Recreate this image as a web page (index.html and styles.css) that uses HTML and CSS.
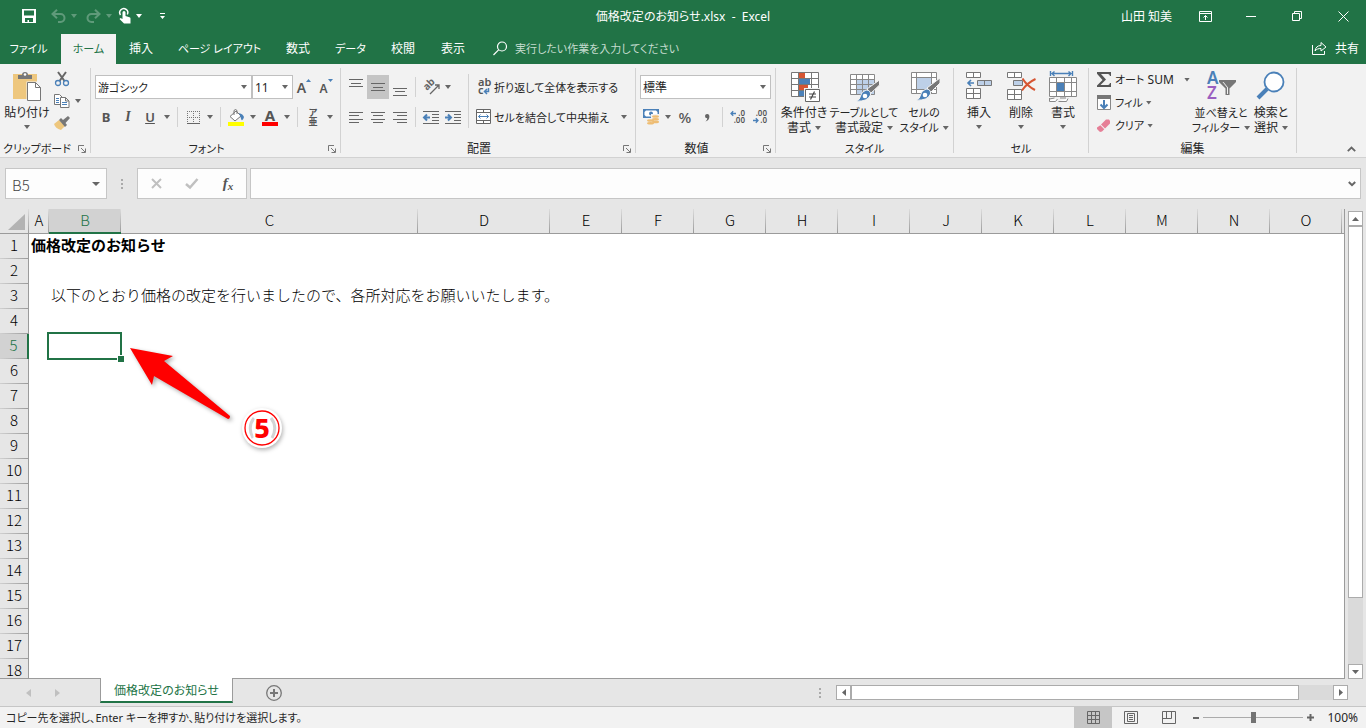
FILE: index.html
```html
<!DOCTYPE html>
<html lang="ja">
<head>
<meta charset="utf-8">
<title>価格改定のお知らせ.xlsx - Excel</title>
<link rel="stylesheet" href="styles.css">
</head>
<body>
<header class="titlebar">
  <div class="quick">
    <button class="q-btn q-save" aria-label="上書き保存"><svg width="14" height="14"><path fill="#fff" fill-rule="evenodd" d="M0 0h14v14H0zM2 1.500v5h10v-5zM3 9v4h2.500v-2H7v2h4V9z"/></svg></button>
    <button class="q-btn dim" aria-label="元に戻す"><svg width="15" height="14" fill="none" stroke="#fff" stroke-width="2"><path d="M1 5h8.500a4 4 0 0 1 0 8H7M6 .8L1.500 5 6 9.200"/></svg><i class="caret"></i></button>
    <button class="q-btn dim" aria-label="やり直し"><svg width="15" height="14" fill="none" stroke="#fff" stroke-width="2"><path d="M14 5H5.500a4 4 0 0 0 0 8H8M9 .8L13.500 5 9 9.200"/></svg><i class="caret"></i></button>
    <button class="q-btn q-touch" aria-label="タッチ/マウス モード"><svg width="12" height="16"><path fill="none" stroke="#fff" stroke-width="1.500" d="M1.500 7A4 4 0 1 1 8.300 6.500"/><path fill="#fff" d="M3.500 4.500a1.500 1.500 0 0 1 3 0V8l4 1.200c.8.300 1 .8 1 1.500V15.500H5L.5 11l1-1 2 1z"/></svg><i class="caret"></i></button>
    <button class="q-btn q-more" aria-label="クイック アクセス ツール バーのユーザー設定"><svg width="5" height="6" fill="#fff"><path d="M0 0h5v1H0zM0 3h5L2.500 6z"/></svg></button>
  </div>
  <div class="doc-title">価格改定のお知らせ.xlsx&nbsp; -&nbsp; Excel</div>
  <div class="window">
    <span class="user">山田 知美</span>
    <button aria-label="リボンの表示オプション"><svg width="13" height="11" fill="none" stroke="#fff"><path d="M.5.500h12v10H.5zM.5 2.500h12M6.500 9V4.500M4.500 6.500l2-2 2 2"/></svg></button>
    <button aria-label="最小化"><svg width="10" height="1"><path fill="#fff" d="M0 0h10v1H0z"/></svg></button>
    <button aria-label="元のサイズに戻す"><svg width="10" height="10" fill="none" stroke="#fff"><path d="M.5 2.500h7v7h-7zM2.500 2.500v-2h7v7h-2"/></svg></button>
    <button aria-label="閉じる"><svg width="11" height="11" fill="none" stroke="#fff"><path d="M.5.500l10 10M10.500.500l-10 10"/></svg></button>
  </div>
</header>

<nav class="tabs">
  <button class="tab file tight">ファイル</button>
  <button class="tab active home tight">ホーム</button>
  <button class="tab">挿入</button>
  <button class="tab page tight">ページ レイアウト</button>
  <button class="tab">数式</button>
  <button class="tab data tight">データ</button>
  <button class="tab">校閲</button>
  <button class="tab">表示</button>
  <label class="tellme"><svg width="15" height="15" fill="none" stroke="#fff" stroke-width="1.200"><circle cx="9" cy="5.500" r="4.500"/><path d="M5.800 8.700L.5 14"/></svg><input class="tight" type="text" placeholder="実行したい作業を入力してください"></label>
  <button class="share"><svg width="15" height="14" fill="none" stroke="#fff"><path d="M.5 4v9.500h12V10M3 10c.5-3.500 2.500-5.500 6-5.500V1.500l5 4.500-5 4V7.500C6.500 7.500 4.500 8 3 10z"/></svg>共有</button>
</nav>

<section class="ribbon">
  <div class="group g-clip">
    <div class="tools">
      <button class="big"><svg width="32" height="32"><path fill="#eec77e" d="M2 3h24v25H2z"/><path fill="#777" d="M7 8V4h4a3 3 0 0 1 6 0h4v4z"/><circle cx="14" cy="3.500" r="1.300" fill="#fff"/><path fill="#fff" stroke="#f2f2f2" stroke-width="3" d="M17 12h9l4 4v14H17z"/><path fill="#fff" stroke="#777" d="M16.500 11.500h8l5 5v13H16.500zM24.500 11.500V16.500H29.500"/></svg><span>貼り付け</span><i class="caret"></i></button>
      <div class="stack">
        <button class="small" aria-label="切り取り"><svg width="16" height="16" fill="none"><path stroke="#666" stroke-width="2" d="M4 1l6.500 9M12 1L5.500 10"/><circle cx="4" cy="12" r="2.500" stroke="#4a80b8" stroke-width="1.300"/><circle cx="12" cy="12" r="2.500" stroke="#4a80b8" stroke-width="1.300"/></svg></button>
        <button class="small" aria-label="コピー"><svg width="16" height="15" fill="#fff" stroke="#777"><path d="M.5.500h5l3 3v7h-8z"/><path d="M6.500 3.500h5l3.500 3.500v6.500H6.500zM11.500 3.500V7H15"/><path stroke="#4a80b8" d="M2 4.500h3M2 6.500h3M2 8.500h3M8 8.500h5M8 10.500h5"/></svg><i class="caret"></i></button>
        <button class="small" aria-label="書式のコピー/貼り付け"><svg width="16" height="14"><path fill="#eec77e" d="M0 8l5-4 6 6-4 4C3 13 1 11 0 8z"/><path fill="#777" d="M5 4l2-2 2 2 5-4 2 2-4.500 5L13 9l-2 2z"/></svg></button>
      </div>
    </div>
    <div class="foot tight">クリップボード<button class="launch" aria-label="クリップボードの詳細"><svg width="8" height="8" fill="none" stroke="#777"><path d="M.5 6V.5H6M3 3l4 4M7.500 3.500v4h-4"/></svg></button></div>
  </div>

  <div class="group g-font">
    <div class="tools rows">
      <div class="row">
        <span class="combo c-font"><select class="tight" aria-label="フォント"><option>游ゴシック</option></select><i class="caret"></i></span><span class="combo c-size"><select aria-label="フォント サイズ"><option>11</option></select><i class="caret"></i></span>
        <button class="ib" aria-label="フォント サイズの拡大"><span class="grow">A</span><svg class="tick" width="5" height="3"><path fill="#4a80b8" d="M0 3h5L2.500 0z"/></svg></button>
        <button class="ib" aria-label="フォント サイズの縮小"><span class="shrink">A</span><svg class="tick" width="5" height="3"><path fill="#4a80b8" d="M0 0h5L2.500 3z"/></svg></button>
      </div>
      <div class="row">
        <button class="ib bold">B</button><button class="ib ital">I</button><button class="ib under">U</button><button class="car" aria-label="下線"><i class="caret"></i></button>
        <i class="sep"></i>
        <button class="ib" aria-label="罫線"><svg width="13" height="13"><path fill="none" stroke="#777" stroke-dasharray="1 1" d="M0 .5h13M0 6.500h13M.5 0v12M6.500 0v12M12.500 0v12"/><path fill="#666" d="M0 12h13v1H0z"/></svg></button><button class="car" aria-label="罫線の種類"><i class="caret"></i></button>
        <i class="sep"></i>
        <button class="ib" aria-label="塗りつぶしの色"><svg width="16" height="17"><path fill="#fff" stroke="#777" d="M2 7.500L8 2l5 5-6 5z"/><path fill="none" stroke="#777" d="M6 6V1.500Q7.500-.5 9 1.500V5"/><path fill="#4a80b8" d="M11 4q4 1 5 4-1 4-2.500 3z"/><path fill="#ff0" d="M0 13h16v4H0z"/></svg></button><button class="car" aria-label="塗りつぶしの色の選択"><i class="caret"></i></button>
        <button class="ib fcolor" aria-label="フォントの色"><span>A</span></button><button class="car" aria-label="フォントの色の選択"><i class="caret"></i></button>
        <i class="sep"></i>
        <button class="ib ruby" aria-label="ふりがなの表示"><span>ア</span><span>亜</span></button><button class="car" aria-label="ふりがなの設定"><i class="caret"></i></button>
      </div>
    </div>
    <div class="foot tight">フォント<button class="launch" aria-label="フォントの設定"><svg width="8" height="8" fill="none" stroke="#777"><path d="M.5 6V.5H6M3 3l4 4M7.500 3.500v4h-4"/></svg></button></div>
  </div>

  <div class="group g-align">
    <div class="tools">
      <div class="rows">
        <div class="row">
          <button class="ib" aria-label="上揃え"><svg width="14" height="17" stroke="#666"><path d="M0 .5h14M2 4.500h10M0 7.500h14"/></svg></button><button class="ib on" aria-label="上下中央揃え"><svg width="14" height="17" stroke="#666"><path d="M0 4.500h14M2 8.500h10M0 11.500h14"/></svg></button><button class="ib" aria-label="下揃え"><svg width="14" height="17" stroke="#666"><path d="M0 9.500h14M2 12.500h10M0 16.500h14"/></svg></button>
          <i class="sep"></i>
          <button class="ib" aria-label="方向"><svg width="16" height="16"><text x="1" y="9" class="ico-ab" transform="rotate(-45 6 7)">ab</text><path fill="none" stroke="#666" stroke-width="1.300" d="M7 15L15.500 6.500M12 6h4v4"/></svg></button><button class="car" aria-label="方向の選択"><i class="caret"></i></button>
        </div>
        <div class="row">
          <button class="ib" aria-label="左揃え"><svg width="14" height="11" stroke="#666"><path d="M0 .5h14M0 3.500h10M0 7.500h14M0 10.500h10"/></svg></button><button class="ib" aria-label="中央揃え"><svg width="14" height="11" stroke="#666"><path d="M0 .5h14M2 3.500h10M0 7.500h14M2 10.500h10"/></svg></button><button class="ib" aria-label="右揃え"><svg width="14" height="11" stroke="#666"><path d="M0 .5h14M4 3.500h10M0 7.500h14M4 10.500h10"/></svg></button>
          <i class="sep"></i>
          <button class="ib" aria-label="インデントを減らす"><svg width="16" height="13"><path stroke="#666" d="M0 .5h16M9 3.500h7M9 6.500h7M9 9.500h7M0 12.500h16"/><path fill="none" stroke="#4a80b8" stroke-width="2" d="M7 6.500H1.500M4 3.500l-3 3 3 3"/></svg></button><button class="ib" aria-label="インデントを増やす"><svg width="16" height="13"><path stroke="#666" d="M0 .5h16M9 3.500h7M9 6.500h7M9 9.500h7M0 12.500h16"/><path fill="none" stroke="#4a80b8" stroke-width="2" d="M0 6.500h5.500M3 3.500l3 3-3 3"/></svg></button>
        </div>
      </div>
      <i class="sep tall"></i>
      <div class="rows">
        <div class="row"><button class="tb tight"><svg width="16" height="17"><text x="2" y="7" class="ico-wrap">ab</text><text x="2" y="15" class="ico-wrap">c</text><path fill="none" stroke="#4a80b8" stroke-width="1.500" d="M12.500 9v3.500H9M11 10l-2.500 2.500L11 15"/></svg>折り返して全体を表示する</button></div>
        <div class="row"><button class="tb tight"><svg width="16" height="16" fill="#fff" stroke="#666"><path d="M.5.500h14v14H.5zM.5 3.500h14M.5 11.500h14M7.500.500v3M7.500 11.500v3"/><path fill="none" stroke="#4a80b8" d="M2.500 7.500h10M4.500 5.500l-2 2 2 2M10.500 5.500l2 2-2 2"/></svg>セルを結合して中央揃え</button><button class="car push" aria-label="結合の選択"><i class="caret"></i></button></div>
      </div>
    </div>
    <div class="foot">配置<button class="launch" aria-label="配置の設定"><svg width="8" height="8" fill="none" stroke="#777"><path d="M.5 6V.5H6M3 3l4 4M7.500 3.500v4h-4"/></svg></button></div>
  </div>

  <div class="group g-num">
    <div class="tools rows">
      <div class="row"><span class="combo c-num"><select aria-label="表示形式"><option>標準</option></select><i class="caret"></i></span></div>
      <div class="row">
        <button class="ib" aria-label="通貨表示形式"><svg width="17" height="16"><path fill="#4a80b8" d="M0 0h16v9H0z"/><path fill="#fff" d="M3 1.500h10l1.500 1.500v3L13 7.500H3L1.500 6V3z"/><circle cx="8" cy="4.500" r="2" fill="#4a80b8"/><path fill="#f2f2f2" d="M8 5h9v4H8zM4 9h12v7H4z"/><g fill="#eebd74"><ellipse cx="12.500" cy="7.500" rx="3.500" ry="1.300"/><ellipse cx="12.500" cy="10.200" rx="3.500" ry="1.300"/><ellipse cx="12.500" cy="12.900" rx="3.500" ry="1.300"/><ellipse cx="7.500" cy="11.500" rx="3.500" ry="1.300"/><ellipse cx="7.500" cy="14.300" rx="3.500" ry="1.300"/></g></svg></button><button class="car" aria-label="通貨の選択"><i class="caret"></i></button><button class="ib pct">%</button><button class="ib" aria-label="桁区切りスタイル"><svg width="6" height="9"><path fill="#666" d="M1 3a2.200 2.200 0 1 1 4.400.500C5.400 6 4 8 1.500 8.500c1-.8 1.700-2 1.700-3.200A2.200 2.200 0 0 1 1 3z"/></svg></button>
        <i class="sep"></i>
        <button class="ib" aria-label="小数点以下の表示桁数を増やす"><svg width="16" height="14"><text x="15" y="6" class="ico-num">.0</text><text x="15" y="13" class="ico-num">.00</text><path fill="none" stroke="#4a80b8" stroke-width="1.300" d="M6 3.500H1M3.200 1.200L1 3.500l2.200 2.300"/></svg></button><button class="ib" aria-label="小数点以下の表示桁数を減らす"><svg width="16" height="14"><text x="15" y="6" class="ico-num">.00</text><text x="15" y="13" class="ico-num">.0</text><path fill="none" stroke="#4a80b8" stroke-width="1.300" d="M1 10.500h5M3.800 8.200L6 10.500l-2.200 2.300"/></svg></button>
      </div>
    </div>
    <div class="foot">数値<button class="launch" aria-label="表示形式の設定"><svg width="8" height="8" fill="none" stroke="#777"><path d="M.5 6V.5H6M3 3l4 4M7.500 3.500v4h-4"/></svg></button></div>
  </div>

  <div class="group g-style">
    <div class="tools">
      <button class="big"><svg width="32" height="32"><path fill="#fff" stroke="#777" d="M3.500 1.500h27v24h-27zM3.500 7.500h27M3.500 13.500h27M3.500 19.500h27M10.500 1.500v24M23.500 1.500v24"/><path fill="#d65532" d="M11 2h6v5h-6zM11 14h9v5h-9z"/><path fill="#4a80b8" d="M11 8h11v5H11zM11 20h5v5h-5z"/><path fill="#fff" stroke="#f2f2f2" stroke-width="3" d="M17.500 18.500h15v12h-15z"/><path fill="#fff" stroke="#666" d="M17.500 18.500h14v12h-14z"/><path stroke="#444" stroke-width="1.200" d="M21 23h7M21 26h7M26.500 20.500l-4 8"/></svg><span>条件付き</span><span>書式<i class="caret"></i></span></button>
      <button class="big w70"><svg width="32" height="32"><path fill="#fff" d="M3 3h24v21H3z"/><path fill="#bdd0e8" d="M9 9h18v15H9z"/><path fill="none" stroke="#888" d="M2.500 3.500h24v20h-24zM2.500 8.500h24M2.500 13.500h24M2.500 18.500h24M8.500 3.500v20M14.500 3.500v20M20.500 3.500v20"/><path fill="#777" stroke="#f2f2f2" d="M31.500 9v5L23 22l-4-4z"/><path fill="#4a80b8" stroke="#f2f2f2" d="M18 19q5 0 4.500 5-3 7-14.500 6 4-1 4.500-5t5.500-6z"/><circle cx="17" cy="25" r="2.300" fill="#fff"/></svg><span class="tight">テーブルとして</span><span>書式設定<i class="caret"></i></span></button>
      <button class="big"><svg width="32" height="32"><path fill="#fff" stroke="#888" d="M3.500 1.500h25v21h-25zM3.500 6.500h25M3.500 18.500h25M8.500 1.500v21M23.500 1.500v21"/><path fill="#bdd0e8" d="M9 7h14v11H9z"/><path fill="#777" stroke="#f2f2f2" d="M32 7v5L23 21l-4-4z"/><path fill="#4a80b8" stroke="#f2f2f2" d="M18 18q5 0 4.500 5-3 7-14.500 6 4-1 4.500-5t5.500-6z"/><circle cx="17" cy="24" r="2.300" fill="#fff"/></svg><span class="tight">セルの</span><span class="tight">スタイル<i class="caret"></i></span></button>
    </div>
    <div class="foot tight">スタイル</div>
  </div>

  <div class="group g-cell">
    <div class="tools">
      <button class="big w42"><svg width="30" height="32"><g fill="#fff" stroke="#777"><path d="M2.500 1.500h14v5h-14zM9.500 1.500v5M2.500 17.500h14v10h-14zM2.500 22.500h14M9.500 17.500v10"/><path fill="#bdd0e8" d="M13.500 9.500h14v5h-14zM20.500 9.500v5"/></g><path fill="none" stroke="#4a80b8" stroke-width="1.600" d="M10 12H4M7 9l-3 3 3 3"/></svg><span>挿入</span><i class="caret"></i></button>
      <button class="big w42"><svg width="32" height="32"><g fill="#fff" stroke="#777"><path d="M2.500 1.500h14v5h-14zM9.500 1.500v5M2.500 18.500h14v10h-14zM2.500 23.500h14M9.500 18.500v10"/><path fill="#bdd0e8" d="M8.500 9.500h9v5h-9z"/></g><path fill="none" stroke="#d65532" stroke-width="2" d="M17.500 7.500Q22 15 30 19M30.500 8Q22 12 17 19.500"/></svg><span>削除</span><i class="caret"></i></button>
      <button class="big w42"><svg width="32" height="32"><path fill="none" stroke="#4a80b8" stroke-width="1.400" d="M3.500 0v5M25.500 0v5M5 2.500h19M7.500.500L5 2.500 7.500 5M21.500.500L24 2.500 21.500 5"/><path fill="#fff" stroke="#888" d="M2.500 6.500h27v19h-27zM2.500 11.500h27M2.500 20.500h27M9.500 6.500v19M17.500 6.500v19M24.500 6.500v19"/><path fill="#4a80b8" d="M10 12h7v8h-7z"/><path fill="#fff" stroke="#888" d="M2.500 27v3.500h6l2-2.500M11.500 30.500h8l1.500-3M2.500 28l5-1M13 27h6"/></svg><span>書式</span><i class="caret"></i></button>
    </div>
    <div class="foot tight">セル</div>
  </div>

  <div class="group g-edit">
    <div class="tools">
      <div class="stack wide">
        <button class="small"><svg width="16" height="16"><path fill="#555" d="M1 0h14v4h-1q-.5-2-2-2H5l5 5.500L4.500 13H12q1.500 0 2-2h1v4H1v-1.500L6.500 8 1 1.800z"/></svg><span><span class="tight">オート</span> SUM</span><i class="caret end"></i></button>
        <button class="small tight"><svg width="16" height="16"><path fill="#fff" stroke="#888" d="M1.500.500h13v14h-13z"/><path fill="#777" d="M1 0h14v4H1z"/><path fill="none" stroke="#4a80b8" stroke-width="2" d="M8 5v8M4.500 9.500L8 13l3.500-3.500"/></svg>フィル<i class="caret"></i></button>
        <button class="small tight"><svg width="16" height="14"><path fill="#e67f97" d="M5 5.500L10 .5h3L14 2v2.500L9 9.500zM4.300 6.200l4 4L6 12.500 4 13 1 10V8.500z"/></svg>クリア<i class="caret"></i></button>
      </div>
      <button class="big w54"><svg width="32" height="32"><text x="2" y="13" class="ico-az blue">A</text><text x="2" y="28" class="ico-az purple">Z</text><path fill="#777" d="M14 9h17v2l-6.500 6.500V24h-4v-6.500L14 11z"/><path fill="#f2f2f2" d="M17.500 11h1l4.500 5.500V23h-1v-6.500z"/></svg><span class="tight">並べ替えと</span><span class="tight">フィルター<i class="caret"></i></span></button>
      <button class="big w46"><svg width="32" height="32"><path stroke="#4a80b8" stroke-width="4" d="M3 27l9-9"/><circle cx="19" cy="11" r="9.500" fill="#fff" stroke="#4a80b8" stroke-width="1.800"/></svg><span>検索と</span><span>選択<i class="caret"></i></span></button>
    </div>
    <div class="foot">編集</div>
  </div>
  <button class="collapse" aria-label="リボンを折りたたむ"><svg width="9" height="6" fill="none" stroke="#666" stroke-width="1.800"><path d="M.8 5.200l3.700-3.700 3.700 3.700"/></svg></button>
</section>

<section class="formula">
  <div class="namebox"><input type="text" value="B5" aria-label="名前ボックス"><button aria-label="名前の一覧"><i class="caret lg"></i></button></div>
  <svg class="dots" width="2" height="10" fill="#aaa"><path d="M0 0h2v2H0zM0 4h2v2H0zM0 8h2v2H0z"/></svg>
  <div class="fx">
    <button aria-label="キャンセル"><svg width="11" height="11" stroke="#c0c0c0" stroke-width="2"><path d="M1 1l9 9M10 1l-9 9"/></svg></button>
    <button aria-label="入力"><svg width="14" height="11" fill="none" stroke="#c0c0c0" stroke-width="2.500"><path d="M1 6l4 3.500L12.500 1"/></svg></button>
    <button class="fn" aria-label="関数の挿入">f<small>x</small></button>
  </div>
  <div class="fbox"><input type="text" aria-label="数式バー"><button aria-label="数式バーの展開"><svg width="8" height="6" fill="none" stroke="#666" stroke-width="2"><path d="M.8 1l3.200 3.200L7.200 1"/></svg></button></div>
</section>

<main class="work">
  <div class="sheet">
    <table class="grid">
      <colgroup><col class="k-head"><col class="k-a"><col class="k-b"><col class="k-c"><col class="k-d"><col class="k" span="11"><col></colgroup>
      <thead><tr><th class="corner"><svg width="17" height="16"><path fill="#b3b3b3" d="M17 0v16H0z"/></svg></th><th>A</th><th class="sel">B</th><th>C</th><th>D</th><th>E</th><th>F</th><th>G</th><th>H</th><th>I</th><th>J</th><th>K</th><th>L</th><th>M</th><th>N</th><th>O</th><th class="rest"></th></tr></thead>
      <tbody>
        <tr><th>1</th><td colspan="16" class="head">価格改定のお知らせ</td></tr>
        <tr><th>2</th><td colspan="16"></td></tr>
        <tr><th>3</th><td></td><td colspan="15">以下のとおり価格の改定を行いましたので、各所対応をお願いいたします。</td></tr>
        <tr><th>4</th><td colspan="16"></td></tr>
        <tr><th class="sel">5</th><td></td><td class="cursor"><span></span></td><td colspan="14"></td></tr>
        <tr><th>6</th><td colspan="16"></td></tr>
        <tr><th>7</th><td colspan="16"></td></tr>
        <tr><th>8</th><td colspan="16"></td></tr>
        <tr><th>9</th><td colspan="16"></td></tr>
        <tr><th>10</th><td colspan="16"></td></tr>
        <tr><th>11</th><td colspan="16"></td></tr>
        <tr><th>12</th><td colspan="16"></td></tr>
        <tr><th>13</th><td colspan="16"></td></tr>
        <tr><th>14</th><td colspan="16"></td></tr>
        <tr><th>15</th><td colspan="16"></td></tr>
        <tr><th>16</th><td colspan="16"></td></tr>
        <tr><th>17</th><td colspan="16"></td></tr>
        <tr><th>18</th><td colspan="16"></td></tr>
      </tbody>
    </table>
    <svg class="note" width="180" height="120">
      <path class="arrow" fill="#f00" d="M10 9L53 17 44 22 110 77Q110 80 108 80L34 37 32 46z"/>
      <circle class="disc" cx="142" cy="89" r="20" fill="#fff"/>
      <circle cx="142" cy="89" r="17" fill="#fff" stroke="#f00" stroke-width="1.300"/>
      <path fill="none" stroke="#d4d4d4" stroke-width="3" d="M134 79Q127 88 133 99M151 79Q158 88 152 99"/>
      <text x="142" y="99" class="num">5</text>
    </svg>
  </div>
  <div class="vscroll"><button aria-label="上へ"><svg width="7" height="4"><path fill="#666" d="M0 4h7L3.500 0z"/></svg></button><div class="track"><div class="thumb"></div></div><button aria-label="下へ"><svg width="7" height="4"><path fill="#666" d="M0 0h7L3.500 4z"/></svg></button></div>
</main>

<footer class="sheets">
  <button class="nav" aria-label="前のシート"><svg width="5" height="8"><path fill="#c0c0c0" d="M5 0v8L0 4z"/></svg></button>
  <button class="nav" aria-label="次のシート"><svg width="5" height="8"><path fill="#c0c0c0" d="M0 0v8l5-4z"/></svg></button>
  <button class="sheet-tab">価格改定のお知らせ</button>
  <button class="add" aria-label="新しいシート"><svg width="16" height="16"><circle cx="8" cy="8" r="7.300" fill="none" stroke="#777" stroke-width="1.300"/><path stroke="#777" stroke-width="2" d="M4 8h8M8 4v8"/></svg></button>
  <svg class="dots" width="2" height="10" fill="#aaa"><path d="M0 0h2v2H0zM0 4h2v2H0zM0 8h2v2H0z"/></svg>
  <div class="hscroll"><button aria-label="左へ"><svg width="4" height="7"><path fill="#666" d="M4 0v7L0 3.500z"/></svg></button><div class="track"><div class="thumb"></div></div><button aria-label="右へ"><svg width="4" height="7"><path fill="#666" d="M0 0v7l4-3.500z"/></svg></button></div>
</footer>

<footer class="status">
  <span class="msg tight">コピー先を選択し、Enter キーを押すか、貼り付けを選択します。</span>
  <button class="view on" aria-label="標準"><svg width="13" height="13" fill="none" stroke="#666"><path d="M.5.500h12v12H.5zM.5 4.500h12M.5 8.500h12M4.500.500v12M8.500.500v12"/></svg></button>
  <button class="view" aria-label="ページ レイアウト"><svg width="14" height="13" fill="none" stroke="#666"><path d="M.5.500h13v12H.5zM3.500 2.500h7v8h-7zM5 4.500h4M5 6.500h4M5 8.500h4"/></svg></button>
  <button class="view" aria-label="改ページ プレビュー"><svg width="14" height="13" fill="none" stroke="#666"><path d="M13.500.500v12H.5V.5h13M.5 7.500h9v-7M4.500.500v7"/></svg></button>
  <button class="zoom" aria-label="縮小"><svg width="6" height="6"><path fill="#666" d="M0 2h6v2H0z"/></svg></button>
  <input type="range" min="0" max="100" value="50" aria-label="ズーム">
  <button class="zoom" aria-label="拡大"><svg width="7" height="7"><path stroke="#666" stroke-width="2" d="M0 3.500h7M3.500 0v7"/></svg></button>
  <span class="pctlabel">100%</span>
</footer>
</body>
</html>
```
FILE: styles.css
```css
* { box-sizing: border-box; }
html, body { height: 100%; }
body {
  margin: 0;
  display: flex;
  flex-direction: column;
  overflow: hidden;
  background: #e6e6e6;
  color: #262626;
  font: 12px/15px "Noto Sans", "Noto Sans CJK JP", sans-serif;
  font-feature-settings: "palt";
}
button, input, select {
  font: inherit;
  font-feature-settings: inherit;
  color: inherit;
  background: none;
  border: 0;
  padding: 0;
  margin: 0;
  outline: 0;
  white-space: nowrap;
}
svg { display: block; flex: none; overflow: visible; }
.tight { font-size: 11px; }
.caret {
  display: inline-block;
  flex: none;
  width: 6px;
  height: 4px;
  background: #666;
  clip-path: polygon(0 0, 100% 0, 50% 100%);
}
.caret.lg { width: 8px; height: 4px; }

/* Title bar */
.titlebar {
  display: grid;
  grid-template-columns: 1fr auto 1fr;
  align-items: center;
  height: 32px;
  background: #217346;
  color: #fff;
}
.titlebar .caret { background: #fff; }
.quick { display: flex; align-items: center; padding-left: 22px; }
.q-btn { display: flex; align-items: center; height: 24px; gap: 5px; }
.q-save { width: 29px; }
.q-touch { width: 41px; margin-left: -2px; }
.dim { opacity: .28; width: 35px; }
.window { display: flex; justify-content: flex-end; align-items: center; }
.user { margin-right: 10px; }
.window button { display: flex; align-items: center; justify-content: center; width: 46px; height: 32px; }

/* Ribbon tabs */
.tabs { display: flex; height: 32px; padding-top: 2px; background: #217346; color: #fff; }
.tab { width: 50px; padding-bottom: 2px; }
.tab.file { width: 61px; padding-right: 4px; }
.tab.home, .tab.data { width: 55px; }
.tab.page { width: 107px; }
.tab.active { background: #f2f2f2; color: #217346; }
.tellme { display: flex; align-items: center; gap: 7px; flex: 1; margin-left: 15px; padding-bottom: 2px; }
.tellme input { flex: 1; }
.tellme input::placeholder { color: #c5dccf; opacity: 1; }
.share { display: flex; align-items: center; gap: 8px; padding: 0 7px 2px 0; }

/* Ribbon */
.ribbon { display: flex; padding: 4px 0; height: 94px; background: #f2f2f2; border-bottom: 1px solid #d2d2d2; }
.group { display: flex; flex-direction: column; flex: none; border-right: 1px solid #d2d2d2; }
.g-clip { width: 91px; }
.g-font { width: 250px; }
.g-align { width: 295px; }
.g-num { width: 140px; }
.g-style { width: 178px; }
.g-cell { width: 135px; }
.g-edit { width: 208px; }
.tools { display: flex; flex: 1; padding-left: 4px; }
.g-clip .tools { padding-left: 2px; }
.g-style .tools { padding-left: 3px; }
.foot { display: flex; justify-content: center; align-items: center; height: 12px; padding-top: 2px; position: relative; }
.g-clip .foot { padding-right: 16px; }
.g-font .foot, .g-align .foot, .g-num .foot { padding-right: 18px; }
.launch { position: absolute; right: 4px; bottom: 0; }
.big { display: flex; flex-direction: column; align-items: center; width: 50px; padding-top: 3px; }
.big svg { margin-bottom: 2px; }
.big span { height: 15px; }
.big span .caret { margin-left: 4px; vertical-align: 2px; }
.big > .caret { margin-top: 5px; }
.w42 { width: 42px; }
.w46 { width: 46px; }
.w54 { width: 54px; }
.w70 { width: 70px; }
.stack { display: flex; flex-direction: column; padding-left: 2px; }
.stack.wide { width: 101px; padding: 0 4px 0 3px; }
.small { display: flex; align-items: center; height: 22px; gap: 5px; }
.wide .small { height: 23px; gap: 3px; }
.end { margin-left: auto; }
.rows { display: flex; flex-direction: column; gap: 6px; padding-top: 7px; }
.row { display: flex; align-items: center; height: 24px; }
.ib { display: flex; align-items: center; justify-content: center; width: 22px; height: 24px; color: #555; }
.ib.on { background: #c5c5c5; }
.car { display: flex; align-items: center; justify-content: center; width: 12px; height: 24px; }
.push { margin-left: auto; }
.sep { width: 1px; height: 20px; margin: 0 4px; background: #d2d2d2; }
.sep.tall { height: 54px; margin-top: 6px; }
.tools > .rows:last-child { flex: 1; padding-right: 5px; }
.tb { display: flex; align-items: center; gap: 2px; padding-left: 3px; }
.combo { display: grid; align-items: center; height: 24px; background: #fff; border: 1px solid #c0c0c0; }
.combo > * { grid-area: 1 / 1; }
.combo select { appearance: none; width: 100%; padding-left: 2px; }
.combo .caret { justify-self: end; margin-right: 4px; pointer-events: none; }
.c-font { width: 157px; }
.c-size { width: 41px; }
.c-num { width: 131px; }
.grow, .shrink { font-weight: 600; font-size: 14px; }
.shrink { font-size: 12px; padding-top: 3px; }
.tick { align-self: flex-start; margin-top: 4px; }
.bold { font-weight: 700; font-size: 13px; }
.ital { font: italic 700 14px "Liberation Serif", serif; }
.under { font-weight: 600; font-size: 13px; text-decoration: underline; }
.fcolor span { width: 16px; height: 17px; border-bottom: 4px solid #f00; font-weight: 700; font-size: 15px; line-height: 13px; }
.ruby { flex-direction: column; font-size: 9px; line-height: 9px; font-weight: 700; }
.pct { font-size: 15px; font-weight: 500; }
.ico-ab { font-size: 10px; font-weight: 700; fill: #666; }
.ico-wrap { font-size: 11px; font-weight: 600; fill: #555; }
.ico-num { font-size: 8px; font-weight: 600; fill: #555; text-anchor: end; }
.ico-az { font-size: 17px; font-weight: 600; }
.blue { fill: #4a80b8; }
.purple { fill: #9a5fc0; }
.collapse { margin-left: auto; margin-right: 10px; align-self: flex-end; padding-bottom: 1px; }

/* Formula bar */
.formula { display: flex; align-items: center; height: 51px; padding: 0 5px; }
.namebox, .fx, .fbox { display: flex; align-items: center; height: 31px; background: #fdfdfd; border: 1px solid #c6c6c6; }
.namebox { width: 102px; }
.namebox input { flex: 1; min-width: 0; padding: 2px 0 0 6px; font: 300 15px "Noto Sans CJK JP", sans-serif; color: #444; }
.namebox button { padding: 0 6px 4px; }
.formula .dots { margin: 0 14px; }
.fx { width: 110px; margin-right: 3px; }
.fx button { display: flex; flex: 1; justify-content: center; align-items: center; }
.fx .fn { font: italic 700 15px "Liberation Serif", serif; color: #555; }
.fn small { font-size: 11px; padding-top: 4px; }
.fbox { flex: 1; }
.fbox input { flex: 1; }
.fbox button { padding: 0 4px; }

/* Worksheet */
.work { display: flex; flex: 1; min-height: 0; }
.sheet { position: relative; flex: 1; overflow: hidden; background: #fff; border: solid #9b9b9b; border-width: 0 1px 1px 0; }
.grid { width: 100%; table-layout: fixed; border-collapse: separate; border-spacing: 0; font: 300 15px/20px "Noto Sans CJK JP", sans-serif; font-feature-settings: normal; color: #000; }
.k-head { width: 29px; }
.k-a { width: 20px; }
.k-b, .k { width: 72px; }
.k-c { width: 297px; }
.k-d { width: 132px; }
.grid th, .grid td { height: 25px; padding: 0 0 4px; font-weight: 300; }
.grid thead th {
  padding-bottom: 2px;
  border-bottom: 1px solid #9b9b9b;
  background: linear-gradient(#dcdcdc, #9b9b9b) right / 1px 100% no-repeat #e6e6e6;
}
.grid thead th.rest { background: #e6e6e6; }
.grid thead th.sel { background-color: #d2d2d2; border-bottom: 2px solid #217346; padding-bottom: 1px; color: #217346; }
.grid thead th.corner { padding: 2px 0 0 8px; }
.grid tbody th {
  border-right: 1px solid #9b9b9b;
  background: linear-gradient(to right, #d0d0d0, #9b9b9b) bottom / 100% 1px no-repeat #e6e6e6;
}
.grid tbody th.sel { background-color: #d2d2d2; border-right: 2px solid #217346; color: #217346; }
.grid td { padding-left: 2px; white-space: nowrap; }
.grid td.head { font-weight: 700; }
.cursor { position: relative; }
.cursor span { position: absolute; inset: -2px -1px -1px -2px; border: 2px solid #217346; }
.cursor span::after { content: ""; position: absolute; right: -4px; bottom: -4px; width: 6px; height: 6px; background: #217346; border: solid #fff; border-width: 1px 0 0 1px; }
.note { position: absolute; left: 120px; top: 130px; }
.arrow { filter: drop-shadow(2px 2px 2px rgba(0, 0, 0, .35)); }
.disc { filter: drop-shadow(1px 2px 2px rgba(0, 0, 0, .3)); }
.num { font: 800 27px "Noto Sans", sans-serif; fill: #f00; stroke: #fff; stroke-width: 4px; paint-order: stroke; text-anchor: middle; }

/* Scroll bars */
.vscroll { display: flex; flex-direction: column; width: 15px; margin: 2px 3px 0; }
.vscroll button, .hscroll button { display: flex; align-items: center; justify-content: center; flex: none; width: 15px; height: 15px; background: #fff; border: 1px solid #ababab; }
.track { flex: 1; background: #dadada; }
.thumb { background: #fff; border: 1px solid #ababab; }
.vscroll .thumb { height: 85%; }
.hscroll { display: flex; flex: 0 0 512px; height: 15px; margin-right: 18px; }
.hscroll .thumb { width: 93%; height: 15px; }

/* Sheet tabs */
.sheets { display: flex; align-items: center; height: 27px; }
.nav { display: flex; justify-content: center; width: 29px; }
.nav:first-child { margin-left: 14px; }
.sheet-tab { position: relative; align-self: flex-start; height: 25px; width: 133px; padding-top: 2px; margin: -1px 33px 0 28px; background: #fff; border: solid #9b9b9b; border-width: 0 1px; border-bottom: 2px solid #217346; color: #217346; }
.sheets .dots { margin: 0 15px 0 auto; }

/* Status bar */
.status { display: flex; align-items: center; height: 22px; background: #f2f2f2; border-top: 1px solid #c6c6c6; padding: 0 8px 0 6px; }
.msg { flex: 1; }
.view { display: flex; align-items: center; justify-content: center; width: 38px; height: 21px; }
.view.on { background: #c6c6c6; }
.zoom { display: flex; justify-content: center; width: 15px; }
.status input { appearance: none; width: 100px; height: 12px; background: linear-gradient(#ababab, #ababab) center / 100% 1px no-repeat; }
.status input::-webkit-slider-thumb { appearance: none; width: 5px; height: 11px; background: #737373; }
.pctlabel { width: 40px; text-align: right; }
```
